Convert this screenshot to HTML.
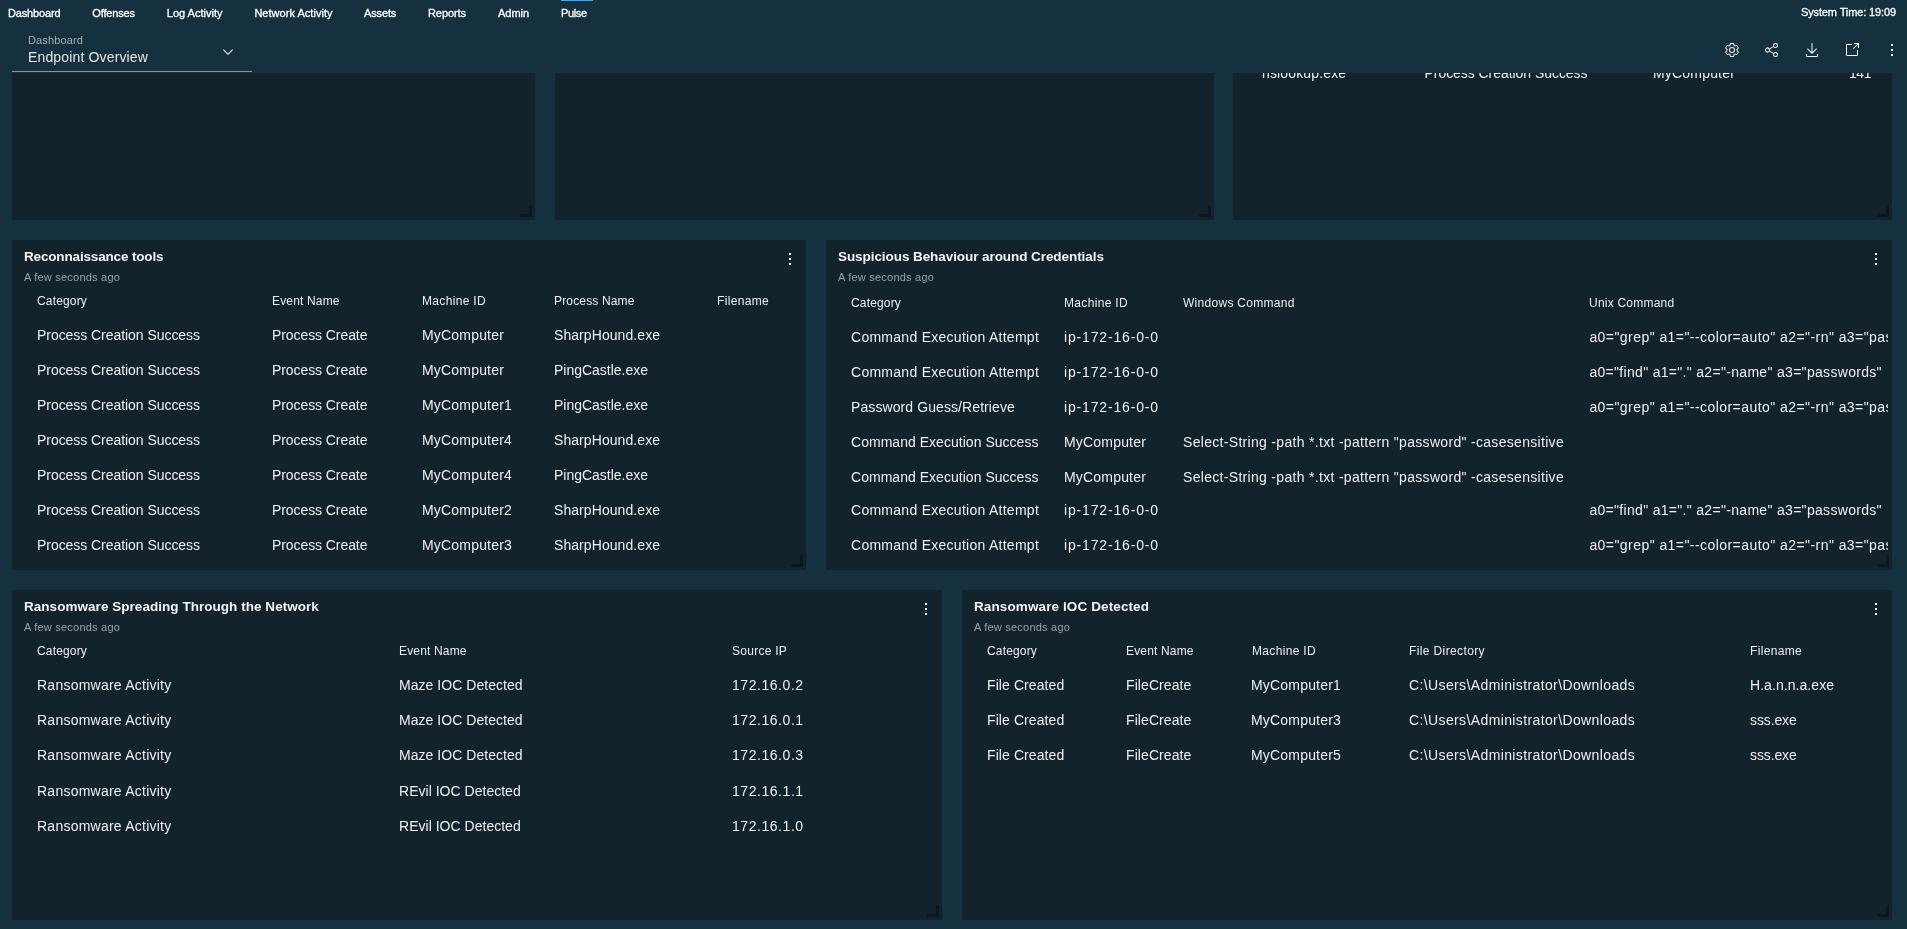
<!DOCTYPE html>
<html><head><meta charset="utf-8"><title>Endpoint Overview</title>
<style>
html,body{margin:0;padding:0;}
body{width:1907px;height:929px;overflow:hidden;background:#15303e;position:relative;font-family:'Liberation Sans', sans-serif;}
.t{position:absolute;white-space:pre;line-height:1;}
#hdr{position:absolute;left:0;top:0;width:1907px;height:73px;background:#15303e;will-change:transform}
</style></head><body>
<div id="wrap" style="position:absolute;left:0;top:0;width:1907px;height:929px;will-change:transform">
<div style="position:absolute;left:12px;top:0px;width:523px;height:220px;background:#12232b;"></div><div style="position:absolute;left:529px;top:205px;width:3px;height:12px;background:#0c1820;"></div><div style="position:absolute;left:520px;top:214px;width:12px;height:3px;background:#0c1820;"></div><div style="position:absolute;left:555px;top:0px;width:659px;height:220px;background:#12232b;"></div><div style="position:absolute;left:1208px;top:205px;width:3px;height:12px;background:#0c1820;"></div><div style="position:absolute;left:1199px;top:214px;width:12px;height:3px;background:#0c1820;"></div><div style="position:absolute;left:1233px;top:0px;width:659px;height:220px;background:#12232b;"></div><div style="position:absolute;left:1886px;top:205px;width:3px;height:12px;background:#0c1820;"></div><div style="position:absolute;left:1877px;top:214px;width:12px;height:3px;background:#0c1820;"></div><div style="position:absolute;left:12px;top:240px;width:794px;height:330px;background:#12232b;"></div><div style="position:absolute;left:800px;top:555px;width:3px;height:12px;background:#0c1820;"></div><div style="position:absolute;left:791px;top:564px;width:12px;height:3px;background:#0c1820;"></div><div style="position:absolute;left:789px;top:253px;width:2px;height:2px;background:#f4f4f4;"></div><div style="position:absolute;left:789px;top:258px;width:2px;height:2px;background:#f4f4f4;"></div><div style="position:absolute;left:789px;top:263px;width:2px;height:2px;background:#f4f4f4;"></div><div style="position:absolute;left:826px;top:240px;width:1066px;height:330px;background:#12232b;"></div><div style="position:absolute;left:1886px;top:555px;width:3px;height:12px;background:#0c1820;"></div><div style="position:absolute;left:1877px;top:564px;width:12px;height:3px;background:#0c1820;"></div><div style="position:absolute;left:1875px;top:253px;width:2px;height:2px;background:#f4f4f4;"></div><div style="position:absolute;left:1875px;top:258px;width:2px;height:2px;background:#f4f4f4;"></div><div style="position:absolute;left:1875px;top:263px;width:2px;height:2px;background:#f4f4f4;"></div><div style="position:absolute;left:12px;top:590px;width:930px;height:330px;background:#12232b;"></div><div style="position:absolute;left:936px;top:905px;width:3px;height:12px;background:#0c1820;"></div><div style="position:absolute;left:927px;top:914px;width:12px;height:3px;background:#0c1820;"></div><div style="position:absolute;left:925px;top:603px;width:2px;height:2px;background:#f4f4f4;"></div><div style="position:absolute;left:925px;top:608px;width:2px;height:2px;background:#f4f4f4;"></div><div style="position:absolute;left:925px;top:613px;width:2px;height:2px;background:#f4f4f4;"></div><div style="position:absolute;left:962px;top:590px;width:930px;height:330px;background:#12232b;"></div><div style="position:absolute;left:1886px;top:905px;width:3px;height:12px;background:#0c1820;"></div><div style="position:absolute;left:1877px;top:914px;width:12px;height:3px;background:#0c1820;"></div><div style="position:absolute;left:1875px;top:603px;width:2px;height:2px;background:#f4f4f4;"></div><div style="position:absolute;left:1875px;top:608px;width:2px;height:2px;background:#f4f4f4;"></div><div style="position:absolute;left:1875px;top:613px;width:2px;height:2px;background:#f4f4f4;"></div>
<div class="t" style="top:66px;font-size:14px;color:#f0f0f0;letter-spacing:0.15px;left:1262px;">nslookup.exe</div>
<div class="t" style="top:66px;font-size:14px;color:#f0f0f0;letter-spacing:-0.05px;left:1424.5px;">Process Creation Success</div>
<div class="t" style="top:66px;font-size:14px;color:#f0f0f0;letter-spacing:0.19px;left:1653px;">MyComputer</div>
<div class="t" style="top:66px;font-size:14px;color:#f0f0f0;letter-spacing:-0.45px;right:36px;">141</div>
<div class="t" style="top:250px;font-size:13.5px;font-weight:700;color:#f4f4f4;letter-spacing:-0.16px;left:24px;">Reconnaissance tools</div>
<div class="t" style="top:272px;font-size:11px;color:#9ba1a5;letter-spacing:0.22px;left:24px;">A few seconds ago</div>
<div class="t" style="top:295px;font-size:12px;color:#eeeeee;letter-spacing:0.16px;left:37px;">Category</div>
<div class="t" style="top:295px;font-size:12px;color:#eeeeee;letter-spacing:0.16px;left:272px;">Event Name</div>
<div class="t" style="top:295px;font-size:12px;color:#eeeeee;letter-spacing:0.33px;left:422px;">Machine ID</div>
<div class="t" style="top:295px;font-size:12px;color:#eeeeee;letter-spacing:0.16px;left:554px;">Process Name</div>
<div class="t" style="top:295px;font-size:12px;color:#eeeeee;letter-spacing:0.33px;left:717px;">Filename</div>
<div class="t" style="top:328px;font-size:14px;color:#f0f0f0;letter-spacing:-0.05px;left:37px;">Process Creation Success</div>
<div class="t" style="top:328px;font-size:14px;color:#f0f0f0;letter-spacing:-0.08px;left:272px;">Process Create</div>
<div class="t" style="top:328px;font-size:14px;color:#f0f0f0;letter-spacing:0.19px;left:422px;">MyComputer</div>
<div class="t" style="top:328px;font-size:14px;color:#f0f0f0;letter-spacing:0.07px;left:554px;">SharpHound.exe</div>
<div class="t" style="top:363px;font-size:14px;color:#f0f0f0;letter-spacing:-0.05px;left:37px;">Process Creation Success</div>
<div class="t" style="top:363px;font-size:14px;color:#f0f0f0;letter-spacing:-0.08px;left:272px;">Process Create</div>
<div class="t" style="top:363px;font-size:14px;color:#f0f0f0;letter-spacing:0.19px;left:422px;">MyComputer</div>
<div class="t" style="top:363px;font-size:14px;color:#f0f0f0;letter-spacing:-0.01px;left:554px;">PingCastle.exe</div>
<div class="t" style="top:398px;font-size:14px;color:#f0f0f0;letter-spacing:-0.05px;left:37px;">Process Creation Success</div>
<div class="t" style="top:398px;font-size:14px;color:#f0f0f0;letter-spacing:-0.08px;left:272px;">Process Create</div>
<div class="t" style="top:398px;font-size:14px;color:#f0f0f0;letter-spacing:0.19px;left:422px;">MyComputer1</div>
<div class="t" style="top:398px;font-size:14px;color:#f0f0f0;letter-spacing:-0.01px;left:554px;">PingCastle.exe</div>
<div class="t" style="top:433px;font-size:14px;color:#f0f0f0;letter-spacing:-0.05px;left:37px;">Process Creation Success</div>
<div class="t" style="top:433px;font-size:14px;color:#f0f0f0;letter-spacing:-0.08px;left:272px;">Process Create</div>
<div class="t" style="top:433px;font-size:14px;color:#f0f0f0;letter-spacing:0.19px;left:422px;">MyComputer4</div>
<div class="t" style="top:433px;font-size:14px;color:#f0f0f0;letter-spacing:0.07px;left:554px;">SharpHound.exe</div>
<div class="t" style="top:468px;font-size:14px;color:#f0f0f0;letter-spacing:-0.05px;left:37px;">Process Creation Success</div>
<div class="t" style="top:468px;font-size:14px;color:#f0f0f0;letter-spacing:-0.08px;left:272px;">Process Create</div>
<div class="t" style="top:468px;font-size:14px;color:#f0f0f0;letter-spacing:0.19px;left:422px;">MyComputer4</div>
<div class="t" style="top:468px;font-size:14px;color:#f0f0f0;letter-spacing:-0.01px;left:554px;">PingCastle.exe</div>
<div class="t" style="top:503px;font-size:14px;color:#f0f0f0;letter-spacing:-0.05px;left:37px;">Process Creation Success</div>
<div class="t" style="top:503px;font-size:14px;color:#f0f0f0;letter-spacing:-0.08px;left:272px;">Process Create</div>
<div class="t" style="top:503px;font-size:14px;color:#f0f0f0;letter-spacing:0.19px;left:422px;">MyComputer2</div>
<div class="t" style="top:503px;font-size:14px;color:#f0f0f0;letter-spacing:0.07px;left:554px;">SharpHound.exe</div>
<div class="t" style="top:538px;font-size:14px;color:#f0f0f0;letter-spacing:-0.05px;left:37px;">Process Creation Success</div>
<div class="t" style="top:538px;font-size:14px;color:#f0f0f0;letter-spacing:-0.08px;left:272px;">Process Create</div>
<div class="t" style="top:538px;font-size:14px;color:#f0f0f0;letter-spacing:0.19px;left:422px;">MyComputer3</div>
<div class="t" style="top:538px;font-size:14px;color:#f0f0f0;letter-spacing:0.07px;left:554px;">SharpHound.exe</div>
<div class="t" style="top:250px;font-size:13.5px;font-weight:700;color:#f4f4f4;letter-spacing:-0.07px;left:838px;">Suspicious Behaviour around Credentials</div>
<div class="t" style="top:272px;font-size:11px;color:#9ba1a5;letter-spacing:0.22px;left:838px;">A few seconds ago</div>
<div class="t" style="top:297px;font-size:12px;color:#eeeeee;letter-spacing:0.16px;left:851px;">Category</div>
<div class="t" style="top:297px;font-size:12px;color:#eeeeee;letter-spacing:0.33px;left:1064px;">Machine ID</div>
<div class="t" style="top:297px;font-size:12px;color:#eeeeee;letter-spacing:0.29px;left:1183px;">Windows Command</div>
<div class="t" style="top:297px;font-size:12px;color:#eeeeee;letter-spacing:0.22px;left:1589px;">Unix Command</div>
<div class="t" style="top:330px;font-size:14px;color:#f0f0f0;letter-spacing:0.27px;left:851px;">Command Execution Attempt</div>
<div class="t" style="top:330px;font-size:14px;color:#f0f0f0;letter-spacing:0.84px;left:1064px;">ip-172-16-0-0</div>
<div class="t" style="top:330px;font-size:14px;color:#f0f0f0;letter-spacing:0.44px;left:1589.4px;width:298.5999999999999px;overflow:hidden;padding-bottom:5px;">a0=&quot;grep&quot; a1=&quot;--color=auto&quot; a2=&quot;-rn&quot; a3=&quot;passwords&quot;</div>
<div class="t" style="top:365px;font-size:14px;color:#f0f0f0;letter-spacing:0.27px;left:851px;">Command Execution Attempt</div>
<div class="t" style="top:365px;font-size:14px;color:#f0f0f0;letter-spacing:0.84px;left:1064px;">ip-172-16-0-0</div>
<div class="t" style="top:365px;font-size:14px;color:#f0f0f0;letter-spacing:0.31px;left:1589.4px;width:298.5999999999999px;overflow:hidden;padding-bottom:5px;">a0=&quot;find&quot; a1=&quot;.&quot; a2=&quot;-name&quot; a3=&quot;passwords&quot;</div>
<div class="t" style="top:400px;font-size:14px;color:#f0f0f0;letter-spacing:0.09px;left:851px;">Password Guess/Retrieve</div>
<div class="t" style="top:400px;font-size:14px;color:#f0f0f0;letter-spacing:0.84px;left:1064px;">ip-172-16-0-0</div>
<div class="t" style="top:400px;font-size:14px;color:#f0f0f0;letter-spacing:0.44px;left:1589.4px;width:298.5999999999999px;overflow:hidden;padding-bottom:5px;">a0=&quot;grep&quot; a1=&quot;--color=auto&quot; a2=&quot;-rn&quot; a3=&quot;passwords&quot;</div>
<div class="t" style="top:435px;font-size:14px;color:#f0f0f0;letter-spacing:0.03px;left:851px;">Command Execution Success</div>
<div class="t" style="top:435px;font-size:14px;color:#f0f0f0;letter-spacing:0.19px;left:1064px;">MyComputer</div>
<div class="t" style="top:435px;font-size:14px;color:#f0f0f0;letter-spacing:0.31px;left:1183px;">Select-String -path *.txt -pattern &quot;password&quot; -casesensitive</div>
<div class="t" style="top:470px;font-size:14px;color:#f0f0f0;letter-spacing:0.03px;left:851px;">Command Execution Success</div>
<div class="t" style="top:470px;font-size:14px;color:#f0f0f0;letter-spacing:0.19px;left:1064px;">MyComputer</div>
<div class="t" style="top:470px;font-size:14px;color:#f0f0f0;letter-spacing:0.31px;left:1183px;">Select-String -path *.txt -pattern &quot;password&quot; -casesensitive</div>
<div class="t" style="top:503px;font-size:14px;color:#f0f0f0;letter-spacing:0.27px;left:851px;">Command Execution Attempt</div>
<div class="t" style="top:503px;font-size:14px;color:#f0f0f0;letter-spacing:0.84px;left:1064px;">ip-172-16-0-0</div>
<div class="t" style="top:503px;font-size:14px;color:#f0f0f0;letter-spacing:0.31px;left:1589.4px;width:298.5999999999999px;overflow:hidden;padding-bottom:5px;">a0=&quot;find&quot; a1=&quot;.&quot; a2=&quot;-name&quot; a3=&quot;passwords&quot;</div>
<div class="t" style="top:538px;font-size:14px;color:#f0f0f0;letter-spacing:0.27px;left:851px;">Command Execution Attempt</div>
<div class="t" style="top:538px;font-size:14px;color:#f0f0f0;letter-spacing:0.84px;left:1064px;">ip-172-16-0-0</div>
<div class="t" style="top:538px;font-size:14px;color:#f0f0f0;letter-spacing:0.44px;left:1589.4px;width:298.5999999999999px;overflow:hidden;padding-bottom:5px;">a0=&quot;grep&quot; a1=&quot;--color=auto&quot; a2=&quot;-rn&quot; a3=&quot;passwords&quot;</div>
<div class="t" style="top:600px;font-size:13.5px;font-weight:700;color:#f4f4f4;letter-spacing:0.04px;left:24px;">Ransomware Spreading Through the Network</div>
<div class="t" style="top:622px;font-size:11px;color:#9ba1a5;letter-spacing:0.22px;left:24px;">A few seconds ago</div>
<div class="t" style="top:645px;font-size:12px;color:#eeeeee;letter-spacing:0.16px;left:37px;">Category</div>
<div class="t" style="top:645px;font-size:12px;color:#eeeeee;letter-spacing:0.16px;left:399px;">Event Name</div>
<div class="t" style="top:645px;font-size:12px;color:#eeeeee;letter-spacing:0.26px;left:732px;">Source IP</div>
<div class="t" style="top:678px;font-size:14px;color:#f0f0f0;letter-spacing:0.24px;left:37px;">Ransomware Activity</div>
<div class="t" style="top:678px;font-size:14px;color:#f0f0f0;letter-spacing:0.04px;left:399px;">Maze IOC Detected</div>
<div class="t" style="top:678px;font-size:14px;color:#f0f0f0;letter-spacing:0.55px;left:732px;">172.16.0.2</div>
<div class="t" style="top:713px;font-size:14px;color:#f0f0f0;letter-spacing:0.24px;left:37px;">Ransomware Activity</div>
<div class="t" style="top:713px;font-size:14px;color:#f0f0f0;letter-spacing:0.04px;left:399px;">Maze IOC Detected</div>
<div class="t" style="top:713px;font-size:14px;color:#f0f0f0;letter-spacing:0.55px;left:732px;">172.16.0.1</div>
<div class="t" style="top:748px;font-size:14px;color:#f0f0f0;letter-spacing:0.24px;left:37px;">Ransomware Activity</div>
<div class="t" style="top:748px;font-size:14px;color:#f0f0f0;letter-spacing:0.04px;left:399px;">Maze IOC Detected</div>
<div class="t" style="top:748px;font-size:14px;color:#f0f0f0;letter-spacing:0.55px;left:732px;">172.16.0.3</div>
<div class="t" style="top:784px;font-size:14px;color:#f0f0f0;letter-spacing:0.24px;left:37px;">Ransomware Activity</div>
<div class="t" style="top:784px;font-size:14px;color:#f0f0f0;letter-spacing:0.02px;left:399px;">REvil IOC Detected</div>
<div class="t" style="top:784px;font-size:14px;color:#f0f0f0;letter-spacing:0.55px;left:732px;">172.16.1.1</div>
<div class="t" style="top:819px;font-size:14px;color:#f0f0f0;letter-spacing:0.24px;left:37px;">Ransomware Activity</div>
<div class="t" style="top:819px;font-size:14px;color:#f0f0f0;letter-spacing:0.02px;left:399px;">REvil IOC Detected</div>
<div class="t" style="top:819px;font-size:14px;color:#f0f0f0;letter-spacing:0.55px;left:732px;">172.16.1.0</div>
<div class="t" style="top:600px;font-size:13.5px;font-weight:700;color:#f4f4f4;letter-spacing:0.11px;left:974px;">Ransomware IOC Detected</div>
<div class="t" style="top:622px;font-size:11px;color:#9ba1a5;letter-spacing:0.22px;left:974px;">A few seconds ago</div>
<div class="t" style="top:645px;font-size:12px;color:#eeeeee;letter-spacing:0.16px;left:987px;">Category</div>
<div class="t" style="top:645px;font-size:12px;color:#eeeeee;letter-spacing:0.16px;left:1126px;">Event Name</div>
<div class="t" style="top:645px;font-size:12px;color:#eeeeee;letter-spacing:0.33px;left:1252px;">Machine ID</div>
<div class="t" style="top:645px;font-size:12px;color:#eeeeee;letter-spacing:0.38px;left:1409px;">File Directory</div>
<div class="t" style="top:645px;font-size:12px;color:#eeeeee;letter-spacing:0.33px;left:1750px;">Filename</div>
<div class="t" style="top:678px;font-size:14px;color:#f0f0f0;letter-spacing:0.09px;left:987px;">File Created</div>
<div class="t" style="top:678px;font-size:14px;color:#f0f0f0;letter-spacing:0.08px;left:1126px;">FileCreate</div>
<div class="t" style="top:678px;font-size:14px;color:#f0f0f0;letter-spacing:0.19px;left:1251px;">MyComputer1</div>
<div class="t" style="top:678px;font-size:14px;color:#f0f0f0;letter-spacing:0.38px;left:1409px;">C:\Users\Administrator\Downloads</div>
<div class="t" style="top:678px;font-size:14px;color:#f0f0f0;letter-spacing:0.06px;left:1750px;">H.a.n.n.a.exe</div>
<div class="t" style="top:713px;font-size:14px;color:#f0f0f0;letter-spacing:0.09px;left:987px;">File Created</div>
<div class="t" style="top:713px;font-size:14px;color:#f0f0f0;letter-spacing:0.08px;left:1126px;">FileCreate</div>
<div class="t" style="top:713px;font-size:14px;color:#f0f0f0;letter-spacing:0.19px;left:1251px;">MyComputer3</div>
<div class="t" style="top:713px;font-size:14px;color:#f0f0f0;letter-spacing:0.38px;left:1409px;">C:\Users\Administrator\Downloads</div>
<div class="t" style="top:713px;font-size:14px;color:#f0f0f0;letter-spacing:-0.12px;left:1750px;">sss.exe</div>
<div class="t" style="top:748px;font-size:14px;color:#f0f0f0;letter-spacing:0.09px;left:987px;">File Created</div>
<div class="t" style="top:748px;font-size:14px;color:#f0f0f0;letter-spacing:0.08px;left:1126px;">FileCreate</div>
<div class="t" style="top:748px;font-size:14px;color:#f0f0f0;letter-spacing:0.19px;left:1251px;">MyComputer5</div>
<div class="t" style="top:748px;font-size:14px;color:#f0f0f0;letter-spacing:0.38px;left:1409px;">C:\Users\Administrator\Downloads</div>
<div class="t" style="top:748px;font-size:14px;color:#f0f0f0;letter-spacing:-0.12px;left:1750px;">sss.exe</div>
<div id="hdr">
<div style="position:absolute;left:561px;top:0px;width:32px;height:1px;background:#2eaaff"></div><div style="position:absolute;left:12px;top:71px;width:240px;height:1px;background:#8d9297"></div>
<div class="t" style="top:8px;font-size:11px;color:#ffffff;letter-spacing:-0.16px;left:8px;-webkit-text-stroke:0.3px #ffffff;">Dashboard</div>
<div class="t" style="top:8px;font-size:11px;color:#ffffff;letter-spacing:-0.15px;left:92.3px;-webkit-text-stroke:0.3px #ffffff;">Offenses</div>
<div class="t" style="top:8px;font-size:11px;color:#ffffff;left:166.8px;-webkit-text-stroke:0.3px #ffffff;">Log Activity</div>
<div class="t" style="top:8px;font-size:11px;color:#ffffff;letter-spacing:0.03px;left:254.4px;-webkit-text-stroke:0.3px #ffffff;">Network Activity</div>
<div class="t" style="top:8px;font-size:11px;color:#ffffff;letter-spacing:-0.14px;left:364px;-webkit-text-stroke:0.3px #ffffff;">Assets</div>
<div class="t" style="top:8px;font-size:11px;color:#ffffff;letter-spacing:-0.09px;left:428px;-webkit-text-stroke:0.3px #ffffff;">Reports</div>
<div class="t" style="top:8px;font-size:11px;color:#ffffff;left:498px;-webkit-text-stroke:0.3px #ffffff;">Admin</div>
<div class="t" style="top:8px;font-size:11px;color:#ffffff;letter-spacing:-0.35px;left:561px;-webkit-text-stroke:0.3px #ffffff;">Pulse</div>
<div class="t" style="top:7px;font-size:11px;color:#ffffff;letter-spacing:-0.12px;right:11px;-webkit-text-stroke:0.3px #ffffff;">System Time: 19:09</div>
<div class="t" style="top:35px;font-size:11px;color:#a8adb0;letter-spacing:0.13px;left:28px;">Dashboard</div>
<div class="t" style="top:50px;font-size:14px;color:#e6e6e6;letter-spacing:0.15px;left:28px;">Endpoint Overview</div>

<svg style="position:absolute;left:220px;top:44px" width="16" height="16" viewBox="0 0 16 16"><path d="M8 11L3 6 3.7 5.3 8 9.6 12.3 5.3 13 6z" fill="#f4f4f4"/></svg>
<svg style="position:absolute;left:1724px;top:42px" width="16" height="16" viewBox="0 0 32 32"><path fill="#f4f4f4" d="M27,16.76c0-.25,0-.5,0-.76s0-.51,0-.77l1.92-1.68A2,2,0,0,0,29.3,11L26.94,7a2,2,0,0,0-1.73-1,2,2,0,0,0-.64.1l-2.43.82a11.35,11.35,0,0,0-1.31-.75l-.51-2.52a2,2,0,0,0-2-1.61H13.64a2,2,0,0,0-2,1.61l-.51,2.52a11.48,11.48,0,0,0-1.32.75L7.43,6.06A2,2,0,0,0,6.79,6,2,2,0,0,0,5.06,7L2.7,11a2,2,0,0,0,.41,2.51L5,15.24c0,.25,0,.5,0,.76s0,.51,0,.77L3.11,18.45A2,2,0,0,0,2.7,21L5.06,25a2,2,0,0,0,1.73,1,2,2,0,0,0,.64-.1l2.43-.82a11.35,11.35,0,0,0,1.31.75l.51,2.52a2,2,0,0,0,2,1.61h4.72a2,2,0,0,0,2-1.61l.51-2.52a11.48,11.48,0,0,0,1.32-.75l2.42.82a2,2,0,0,0,.64.1,2,2,0,0,0,1.73-1L29.3,21a2,2,0,0,0-.41-2.51ZM25.21,24l-3.43-1.16a8.86,8.86,0,0,1-2.71,1.57L18.360,28H13.64l-.71-3.55a9.36,9.36,0,0,1-2.7-1.57L6.79,24,4.43,20l2.72-2.4a8.9,8.9,0,0,1,0-3.13L4.43,12,6.79,8l3.43,1.16a8.86,8.86,0,0,1,2.71-1.57L13.64,4h4.72l.71,3.55a9.36,9.36,0,0,1,2.7,1.57L25.21,8,27.57,12l-2.72,2.4a8.9,8.9,0,0,1,0,3.13L27.57,20Z"/><path fill="#f4f4f4" d="M16,22a6,6,0,1,1,6-6A5.94,5.94,0,0,1,16,22Zm0-10a3.91,3.91,0,0,0-4,4,3.91,3.91,0,0,0,4,4,3.91,3.91,0,0,0,4-4A3.91,3.91,0,0,0,16,12Z"/></svg>
<svg style="position:absolute;left:1764px;top:42px" width="16" height="16" viewBox="0 0 32 32"><path fill="#f4f4f4" d="M23,20a5,5,0,0,0-3.89,1.89L11.8,17.32a4.46,4.46,0,0,0,0-2.64l7.31-4.57A5,5,0,1,0,18,7a4.79,4.79,0,0,0,.2,1.32l-7.31,4.57a5,5,0,1,0,0,6.22l7.31,4.57A4.790,4.790,0,0,0,18,25a5,5,0,1,0,5-5ZM23,4a3,3,0,1,1-3,3A3,3,0,0,1,23,4ZM7,19a3,3,0,1,1,3-3A3,3,0,0,1,7,19Zm16,9a3,3,0,1,1,3-3A3,3,0,0,1,23,28Z"/></svg>
<svg style="position:absolute;left:1804px;top:42px" width="16" height="16" viewBox="0 0 32 32"><path fill="#f4f4f4" d="M26,24v4H6V24H4v4H4a2,2,0,0,0,2,2H26a2,2,0,0,0,2-2h0V24Z"/><path fill="#f4f4f4" d="M26,14l-1.41-1.41L17,20.17V2H15V20.17L7.410,12.59,6,14l10,10,10-10Z"/></svg>
<svg style="position:absolute;left:1844px;top:42px" width="16" height="16" viewBox="0 0 32 32"><path fill="#f4f4f4" d="M26,28H6a2.0023,2.0023,0,0,1-2-2V6A2.0023,2.0023,0,0,1,6,4H16V6H6V26H26V16h2V26A2.0023,2.0023,0,0,1,26,28Z"/><path fill="#f4f4f4" d="M20 2 20 4 26.586 4 18 12.586 19.414 14 28 5.414 28 12 30 12 30 2 20 2z"/></svg>
<div style="position:absolute;left:1891px;top:44px;width:2px;height:2px;background:#f4f4f4"></div>
<div style="position:absolute;left:1891px;top:49px;width:2px;height:2px;background:#f4f4f4"></div>
<div style="position:absolute;left:1891px;top:54px;width:2px;height:2px;background:#f4f4f4"></div>

</div>
</div>
</body></html>
